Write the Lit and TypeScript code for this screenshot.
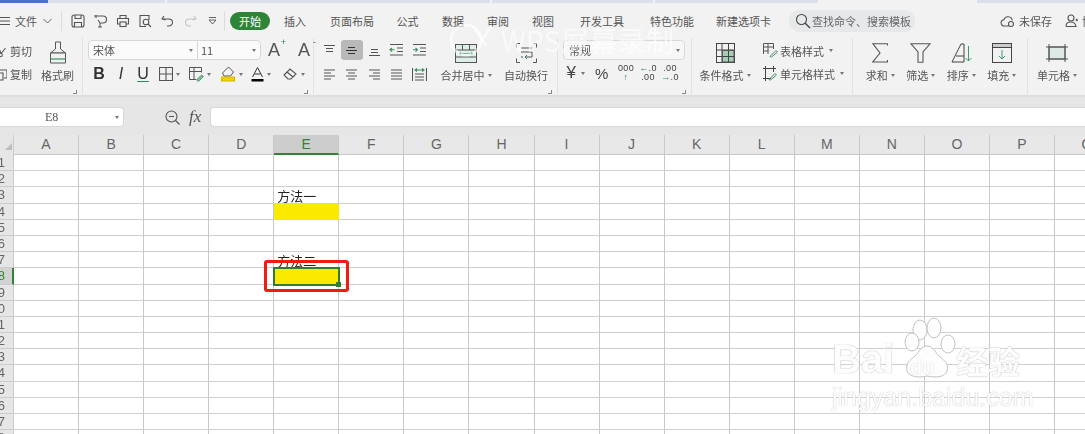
import { LitElement, html, css, svg } from "lit";
import { customElement } from "lit/decorators.js";

const S = (w: number, h: number, body: any, cls = "") =>
  html`<svg class=${cls} width=${w} height=${h} viewBox="0 0 ${w} ${h}" fill="none" stroke="currentColor" stroke-width="1.1">${body}</svg>`;

const I: Record<string, any> = {
  menu: S(11, 10, svg`<path d="M0 1.5h11M0 5h11M0 8.5h11"/>`),
  chev: S(9, 6, svg`<path d="M.5 1l4 4 4-4" stroke-width=".9"/>`),
  save: S(14, 14, svg`<rect x="1" y="1" width="12" height="12" rx="2"/><path d="M4 1v3.5h6V1M3.5 13V8.5h7V13"/>`),
  saveas: S(14, 14, svg`<path d="M1 2h4M3 1v3M5 2h5a3 3 0 0 1 0 7H7.500M7 9v4M5 13h4M5 6l2 3"/>`),
  print: S(14, 14, svg`<path d="M4 4V1.500h6V4M4 10H1.500V4.500h11V10H10"/><rect x="4" y="8" width="6" height="4.500"/>`),
  preview: S(14, 14, svg`<path d="M11 6V1.500H2v11h6"/><circle cx="8" cy="8" r="2.800"/><path d="M10 10l3 3"/>`),
  undo: S(13, 12, svg`<path d="M3 1L1 4l3.500 1M1.500 4H8a3.500 3.500 0 0 1 0 7H6"/>`),
  redo: S(13, 12, svg`<path d="M10 1l2 3-3.500 1M11.500 4H5a3.500 3.500 0 0 0 0 7h2"/>`, "dim"),
  more: S(9, 9, svg`<path d="M1 1.500h7M1 4l3.500 4L8 4z" stroke-width=".9"/>`),
  search: S(16, 16, svg`<circle cx="6.500" cy="6.500" r="5"/><path d="M10 10l5 5" stroke-width="1.400"/>`),
  cloud: S(15, 14, svg`<path d="M9 12H4.500a3.200 3.200 0 0 1-.5-6.400 4.300 4.300 0 0 1 8.300.8"/><circle cx="11" cy="10" r="2.500"/>`),
  user: S(13, 13, svg`<circle cx="6" cy="4" r="3"/><path d="M1 12.500c0-6 9-6 10 0h-10M10.500 6h2.500M11.800 4.800v2.400"/>`),
  scissors: S(12, 14, svg`<circle cx="5.500" cy="11" r="1.800"/><path d="M6 9.500L3 2M6.500 9l4-5"/>`),
  copy: S(12, 14, svg`<path d="M5 3h7M12 3v8H9M3 13V6h5v7z"/>`),
  brush: html`<svg width="20" height="24" viewBox="0 0 20 24" fill="none" stroke="#555" stroke-width="1"><path d="M7.500 1h5v7l5 4H2.500l5-4z"/><path d="M2.500 12h15v10h-15z" fill="#eef3ef"/><path d="M2.500 18h15" stroke="#3d8f5f" stroke-width="1.200"/></svg>`,
  sizeUp: html`<span class="aa">A<sup class="g">+</sup></span>`,
  sizeDown: html`<span class="aa">A<sup>-</sup></span>`,
  border: S(14, 14, svg`<path d="M.5.500h13v13H.5zM.5 7h13M7 .5v13"/>`),
  fmt: html`<svg width="15" height="15" viewBox="0 0 15 15" fill="none" stroke="#555"><path d="M.5 12.500V.5h12v5M.5 4.500h12M5 .5V12M.5 12.500H7"/><path d="M7.500 13l5-5 2 1.500-5 5z" fill="#7fb89a" stroke="#5d9c7c"/></svg>`,
  paint: html`<svg width="15" height="16" viewBox="0 0 15 16" fill="none" stroke="#555"><path d="M7.500 1l5 5-3 4H3L1.500 7z"/><rect x=".5" y="11" width="13" height="4" fill="#f4d000" stroke="#d6b800"/></svg>`,
  fontA: html`<svg width="13" height="15" viewBox="0 0 13 15" fill="none" stroke="#333"><path d="M1.500 10L6.500.5 11.500 10M3.500 7h6"/><rect x=".5" y="12" width="12" height="2.500" fill="#000" stroke="none"/></svg>`,
  eraser: S(15, 14, svg`<path d="M1 8l6-6 6 5-5 5H5zM4 5l6 5"/>`),
  al1: S(13, 11, svg`<path d="M1 .5h11M3 3.500h7M3 6.500h7"/>`),
  al2: S(13, 11, svg`<path d="M3 2.500h7M1 5.500h11M3 8.500h7"/>`),
  al3: S(13, 11, svg`<path d="M3 4.500h7M3 7.500h7M1 10.500h11"/>`),
  ind1: S(15, 12, svg`<path d="M1 .5h13M8 4h6M8 7.500h6M1 11h13"/><path d="M5.500 5.800H1M3 4L1 5.800l2 1.800" stroke="#3d8f5f"/>`),
  ind2: S(15, 12, svg`<path d="M1 .5h13M8 4h6M8 7.500h6M1 11h13"/><path d="M1 5.800h4.500M3.500 4l2 1.800-2 1.800" stroke="#3d8f5f"/>`),
  left: S(13, 11, svg`<path d="M1 1h11M1 4h7M1 7h11M1 10h7"/>`),
  center: S(13, 11, svg`<path d="M1 1h11M3 4h7M1 7h11M3 10h7"/>`),
  right: S(13, 11, svg`<path d="M1 1h11M5 4h7M1 7h11M5 10h7"/>`),
  just: S(13, 11, svg`<path d="M1 1h11M1 4h11M1 7h11M1 10h11"/>`),
  dist: S(15, 13, svg`<path d="M.5 0v13M14.500 0v13M3 6h9M3 9h9M3 12h9"/><path d="M3 2h9M5 .5L3 2l2 1.500M10 .5L12 2l-2 1.500" stroke="#3d8f5f"/>`),
  merge: html`<svg width="22" height="19" viewBox="0 0 22 19" fill="none" stroke="#555"><rect x=".5" y=".5" width="21" height="18" fill="#dfeee6"/><path d="M.5 6h21M7.500.5V6M14.500.5V6M.5 13h21"/><path d="M4 9.500h14M6 8l-2 1.500L6 11M16 8l2 1.500L16 11" stroke="#2e8b57"/></svg>`,
  wrap: html`<svg width="21" height="20" viewBox="0 0 21 20" fill="none" stroke="#555"><path d="M4 .5H.5v4M17 .5h3.500v4M.5 15.500v4H4M20.500 15.500v4H17M5 5h11M5 9h11v5H9M5 14h2"/><path d="M11 12l-2 2 2 2" stroke="#2e8b57"/></svg>`,
  gridc: html`<svg width="19" height="20" viewBox="0 0 19 20" fill="none" stroke="#444"><rect x=".5" y=".5" width="18" height="19"/><path d="M6 .5v19M12.500.5v19M.5 7h18M.5 13.500h18"/><rect x="6.500" y="7.500" width="11.500" height="11.500" fill="#a7cdb6" stroke="#555"/><path d="M12.500 7.500v11.500M6.500 13.500H18"/></svg>`,
  tstyle: html`<svg width="15" height="15" viewBox="0 0 15 15" fill="none" stroke="#555"><path d="M.5 11V.5h10V6M.5 4h10M5 .5V11M.5 8h5"/><path d="M7 13.500l6-6 1.500 1.500-6 5z" stroke="#4b8f6c"/></svg>`,
  cstyle: html`<svg width="15" height="15" viewBox="0 0 15 15" fill="none" stroke="#444"><path d="M0 2.500h13M0 12.500h8M2.500 0v15M10.500 0v6"/><path d="M6 13.500l6-6 1.500 1.500-6 5z" stroke="#4b8f6c"/></svg>`,
  sigma: S(16, 20, svg`<path d="M15.500 2.500V.7H.8L8 10 .8 19h14.700v-2"/>`),
  filter: S(21, 20, svg`<path d="M.8.700h19.400L13 9v10.300H8V9z"/>`),
  sort: html`<svg width="21" height="20" viewBox="0 0 21 20" fill="none" stroke="#444"><path d="M1 19L10 1h3v18H1M5 13h8"/><path d="M17.500 3v15M14.500 15l3 3 3-3" stroke="#3d9b6a"/></svg>`,
  fill: html`<svg width="20" height="20" viewBox="0 0 20 20" fill="none" stroke="#444"><rect x=".5" y=".5" width="19" height="19"/><rect x=".5" y=".5" width="19" height="4" fill="#ccc"/><path d="M10 7v9M7 13l3 3 3-3" stroke="#3d9b6a"/></svg>`,
  cell: html`<svg width="22" height="18" viewBox="0 0 22 18" fill="none" stroke="#555"><rect x="3" y="3" width="16" height="12" fill="#dfe9e3"/><path d="M0 3h22M0 15h22M3 0v18M19 0v18"/></svg>`,
  zoom: S(15, 15, svg`<circle cx="6.500" cy="6.500" r="5.500"/><path d="M10.500 10.500l4 4M4 6.500h5" stroke-width="1.200"/>`),
};

const caret = html`<i class="caret"></i>`;
const corner = html`<i class="launch"></i>`;

@customElement("app-root")
export class AppRoot extends LitElement {
  static styles = css`
    :host { display: block; width: 1085px; height: 434px; overflow: hidden; position: relative; background: #fff; color: #555;
      font-family: "Noto Sans CJK SC", "Noto Sans", sans-serif; font-size: 11px; }
    .blur { filter: blur(0.4px); }
    svg { display: block; flex: none; }
    .dim { color: #c4c4c4; }
    .strip { height: 3px; display: flex; background: #d9dfeb; }
    .strip i { display: block; flex: none; }
    .s1 { width: 48px; background: #4a74c9; }
    .s2 { width: 117px; }
    .s3 { width: 2px; background: #f2f2f2; }
    .s4 { width: 323px; }
    .s5 { width: 161px; }
    .s8 { width: 163px; }
    .s6 { width: 159px; background: #f2f2f2; }
    .menu { height: 35px; background: #f2f2f2; display: flex; align-items: center; white-space: nowrap; }
    .menu > * { flex: none; }
    .file { width: 61px; display: flex; align-items: center; box-sizing: border-box; }
    .file .lbl { font-size: 11px; margin: 0 6px 0 5px; }
    .file svg:first-child { margin-left: -1px; }
    .vsep { width: 1px; height: 20px; background: #dcdcdc; }
    .quick { display: grid; grid-template-columns: repeat(7, 22.5px); margin-left: 4.5px; justify-items: center; align-items: center; width: 157.5px; }
    .pill { width: 40px; height: 18px; border-radius: 9px; background: #2f8537; color: #fff; display: flex; align-items: center; justify-content: center; margin-left: 5px; font-size: 11px; }
    .tabs { display: grid; grid-template-columns: 46px 68px 43px 48px 42px 48px 70px 70px 73px; margin-left: 2px; text-align: center; }
    .search { width: 126px; height: 22px; border-radius: 11px; background: #e6e8ea; margin-left: 9px; display: flex; align-items: center; gap: 1px; padding-left: 6px; box-sizing: border-box; color: #666; font-size: 11px; }
    .search svg { color: #444; }
    .status { display: flex; align-items: center; margin-left: 85px; gap: 4px; }
    .status .u { margin-left: 9px; }

    .ribbon { height: 57px; background: #f2f2f2; display: flex; border-bottom: 1px solid #dcdcdc; }
    .group { position: relative; border-right: 1px solid #e2e2e2; height: 56px; flex: none; box-sizing: border-box; }
    .launch { position: absolute; right: 5px; bottom: 0; width: 3px; height: 3px; border-right: 1px solid #888; border-bottom: 1px solid #888; }
    .g1 { width: 83px; display: grid; grid-template-columns: 35px 45px; }
    .small { display: flex; align-items: center; gap: 1px; height: 23px; margin-left: -3px; white-space: nowrap; }
    .g1 .small { margin-left: -5px; gap: 3px; }
    .stack { padding-top: 1px; }
    .big { display: flex; flex-direction: column; align-items: center; white-space: nowrap; }
    .big .ic { height: 24px; display: flex; align-items: center; justify-content: center; margin-top: 3px; }
    .big .t { display: flex; align-items: center; gap: 3px; height: 16px; margin-top: 2px; line-height: 16px; }
    .g2 { width: 231px; padding-left: 5px; }
    .r1 { display: flex; align-items: center; height: 20px; margin-top: 2px; }
    .sel { height: 20px; box-sizing: border-box; border: 1px solid #d8d8d8; border-radius: 4px; background: #fbfbfb; display: flex; align-items: center; font-size: 11px; color: #555; }
    .fontsel { width: 173px; flex: none; }
    .fontsel .n { width: 109px; height: 100%; display: flex; align-items: center; justify-content: space-between; padding: 0 4px; box-sizing: border-box; border-right: 1px solid #d8d8d8; }
    .fontsel .z { flex: 1; display: flex; align-items: center; justify-content: space-between; padding: 0 4px 0 3px; }
    .aa { font: 18px "Liberation Sans", sans-serif; color: #555; position: relative; display: block; width: 16px; }
    .aa sup { position: absolute; top: -2px; right: -2px; font-size: 9px; line-height: 9px; color: #666; }
    .aa sup.g { color: #2e8b57; }
    .az { display: flex; margin-left: 7px; gap: 14px; }
    .r2 { display: flex; align-items: center; height: 20px; margin-top: 4px; }
    .fcell { display: flex; align-items: center; gap: 3px; padding-left: 5px; box-sizing: border-box; height: 20px; flex: none; }
    .w22 { width: 22px; justify-content: center; padding-left: 0; font: 16px "Liberation Sans", sans-serif; color: #333; }
    .w30 { width: 30px; }
    .w32 { width: 32px; }
    .u { text-decoration: underline; text-decoration-color: #2e8b57; text-underline-offset: 2px; }
    .caret { display: block; width: 0; height: 0; border: 2.5px solid transparent; border-top: 3px solid #777; border-bottom: 0; flex: none; }
    .g3 { width: 244px; display: grid; grid-template-columns: 118px 60px 60px; padding-left: 4px; }
    .aligns { display: grid; grid-template-columns: repeat(5, 22.5px); grid-template-rows: 24px 24px; justify-items: center; align-items: center; height: 48px; align-content: start; }
    .on { background: #b9b9b9; width: 22px; height: 20px; border-radius: 3px; display: flex; align-items: center; justify-content: center; color: #333; }
    .g4 { width: 134px; padding-left: 5px; }
    .numsel { width: 122px; padding: 0 4px 0 5px; justify-content: space-between; background: #f7f7f7; }
    .numrow { display: flex; align-items: center; height: 24px; margin-top: 1px; color: #444; }
    .yen { font: 17px "Liberation Sans", sans-serif; width: 13px; text-align: right; }
    .numrow .caret { margin: 0 0 0 5px; }
    .pct { font: 15px "Liberation Sans", sans-serif; margin-left: 10px; width: 20px; }
    .mini { font: 9px/9px "Liberation Sans", sans-serif; text-align: center; letter-spacing: .3px; width: 22px; }
    .mini b { font-weight: 400; color: #2e8b57; }
    .g5 { width: 161px; display: grid; grid-template-columns: 66px 92px; column-gap: 5px; }
    .g5 .small { margin-left: 0; gap: 2px; }
    .g5 .small .caret { margin-left: 3px; }
    .g6 { width: 175px; display: grid; grid-template-columns: 7px repeat(4, 40.500px); }
    .g7 { flex: 1; border: 0; display: grid; grid-template-columns: 58px; }

    .fbar { height: 39px; background: #e6e6e6; box-sizing: border-box; display: flex; padding-top: 10px; align-items: flex-start; border-top: 1px solid #dedede; }
    .name { width: 124px; flex: none; height: 20px; background: #fff; border: 1px solid #d8d8d8; border-left: 0; border-radius: 0 4px 4px 0; box-sizing: border-box; display: flex; align-items: center; padding: 0 4px 0 45px; justify-content: space-between; color: #555; font: 12px "Liberation Serif", serif; }
    .fx { display: flex; align-items: center; height: 20px; margin-left: 41px; gap: 9px; color: #555; }
    .fx em { font: italic 17px "Liberation Serif", serif; }
    .input { flex: 1; height: 20px; background: #fff; border: 1px solid #d8d8d8; border-right: 0; border-radius: 4px 0 0 4px; margin-left: 9px; box-sizing: border-box; }

    .sheet { display: grid; grid-template-columns: 14px repeat(17, 65.070px); grid-template-rows: 20px repeat(18, 16.200px); height: 299px; overflow: hidden; }
    .cor { background: #e6e6e6; position: relative; border-right: 1px solid #ccc; }
    .cor i { position: absolute; right: 1px; bottom: 5px; width: 0; height: 0; border-left: 7px solid transparent; border-bottom: 7px solid #bdbdbd; }
    .ch { background: #e8e8e8; border-right: 1px solid #c8c8c8; box-sizing: border-box; border-bottom: 1px solid #c8c8c8; text-align: center; font: 14px/19px "Liberation Sans", sans-serif; color: #666; }
    .ch.act { background: #cdcdcd; color: #2f8537; border-bottom: 2px solid #2f8537; }
    .rh { background: #e6e6e6; border-right: 1px solid #c8c8c8; border-bottom: 1px solid #cccccc; box-sizing: border-box; font: 13px/15px "Liberation Sans", sans-serif; color: #666; overflow: hidden; display: flex; justify-content: flex-end; padding-right: 8px; white-space: nowrap; }
    .rh.act { background: #d2d2d2; color: #2f8537; border-right: 2px solid #2f8537; padding-right: 7px; }
    .c { border-right: 1px solid #c8c8c8; border-bottom: 1px solid #d0d0d0; box-sizing: border-box; font-size: 13px; line-height: 16px; color: #222; padding: 1px 0 0 3px; white-space: nowrap; position: relative; }
    .c.y { background: #f9ea00; border-color: #f9ea00; }
    .c.cur { background: #f9ea00; outline: 2.500px solid #2f7d32; outline-offset: -1.500px; z-index: 1; }
    .c.cur i { position: absolute; right: -3px; bottom: -3px; width: 5px; height: 5px; background: #2f7d32; border: 0; }
    .red { position: absolute; left: 264px; top: 260px; width: 85px; height: 32px; border: 3px solid #f01c12; border-radius: 3px; box-sizing: border-box; z-index: 3; }

    .wps { position: absolute; left: 447px; top: 22px; display: flex; align-items: center; gap: 8px; color: rgba(255,255,255,.6); z-index: 4; pointer-events: none; }
    .wps span { font: 28px/36px "Noto Sans CJK SC", sans-serif; letter-spacing: .4px; white-space: nowrap; }
    .bd { position: absolute; left: 830px; top: 312px; width: 200px; height: 100px; z-index: 4; color: #fff; }
    .bd .bai { position: absolute; left: 2px; top: 24px; font: 700 40px/46px "Liberation Sans", sans-serif; color: #fdfdfd; text-shadow: 0 0 1px #bdbdbd, 0 0 1px #bdbdbd; }
    .bd .du { position: absolute; left: 80px; top: 44px; font: 700 20px/22px "Liberation Sans", sans-serif; color: #fdfdfd; text-shadow: 0 0 1px #bdbdbd; }
    .bd .jy { position: absolute; left: 126px; top: 30px; font: 700 32px/36px "Noto Sans CJK SC", sans-serif; color: #fdfdfd; text-shadow: 0 0 1px #bdbdbd, 0 0 1px #bdbdbd; }
    .bd .url { position: absolute; left: 2px; top: 70px; font: 25px/30px "Liberation Sans", sans-serif; color: #fdfdfd; text-shadow: 0 0 1px #c2c2c2, 0 0 1px #c2c2c2; }
    .bd svg { position: absolute; left: 70px; top: 0; }
  `;

  private big(icon: any, label: string, withCaret = true) {
    return html`<div class="big"><div class="ic">${icon}</div><div class="t">${label}${withCaret ? caret : ""}</div></div>`;
  }

  private menu() {
    const tabs = ["插入", "页面布局", "公式", "数据", "审阅", "视图", "开发工具", "特色功能", "新建选项卡"];
    return html`<div class="menu">
      <div class="file">${I.menu}<span class="lbl">文件</span>${I.chev}</div>
      <div class="vsep"></div>
      <div class="quick">${I.save}${I.saveas}${I.print}${I.preview}${I.undo}${I.redo}${I.more}</div>
      <div class="vsep"></div>
      <div class="pill">开始</div>
      <div class="tabs">${tabs.map((t) => html`<span>${t}</span>`)}</div>
      <div class="search">${I.search}<span>查找命令、搜索模板</span></div>
      <div class="status">${I.cloud}<span>未保存</span><span class="u">${I.user}</span><span>协作</span></div>
    </div>`;
  }

  private ribbon() {
    return html`<div class="ribbon">
      <div class="group g1">
        <div class="stack">
          <div class="small">${I.scissors}<span>剪切</span></div>
          <div class="small">${I.copy}<span>复制</span></div>
        </div>
        ${this.big(I.brush, "格式刷", false)}
        ${corner}
      </div>
      <div class="group g2">
        <div class="r1">
          <div class="sel fontsel">
            <div class="n"><span>宋体</span>${caret}</div>
            <div class="z"><span>11</span>${caret}</div>
          </div>
          <div class="az">${I.sizeUp}${I.sizeDown}</div>
        </div>
        <div class="r2">
          <div class="fcell w22"><b>B</b></div>
          <div class="fcell w22"><i>I</i></div>
          <div class="fcell w22"><span class="u">U</span></div>
          <div class="fcell w30">${I.border}${caret}</div>
          <div class="fcell w32">${I.fmt}${caret}</div>
          <div class="fcell w30">${I.paint}${caret}</div>
          <div class="fcell w32">${I.fontA}${caret}</div>
          <div class="fcell w32">${I.eraser}${caret}</div>
        </div>
        ${corner}
      </div>
      <div class="group g3">
        <div class="aligns">
          ${I.al1}<div class="on">${I.al2}</div>${I.al3}${I.ind1}${I.ind2}
          ${I.left}${I.center}${I.right}${I.just}${I.dist}
        </div>
        ${this.big(I.merge, "合并居中")}
        ${this.big(I.wrap, "自动换行", false)}
        ${corner}
      </div>
      <div class="group g4">
        <div class="r1"><div class="sel numsel"><span>常规</span>${caret}</div></div>
        <div class="numrow">
          <span class="yen">¥</span>${caret}
          <span class="pct">%</span>
          <span class="mini">000<br /><b>↑</b></span>
          <span class="mini"><b>←</b>.0<br />.00</span>
          <span class="mini">.00<br /><b>→</b>.0</span>
        </div>
        ${corner}
      </div>
      <div class="group g5">
        ${this.big(I.gridc, "条件格式")}
        <div class="stack">
          <div class="small">${I.tstyle}<span>表格样式</span>${caret}</div>
          <div class="small">${I.cstyle}<span>单元格样式</span>${caret}</div>
        </div>
      </div>
      <div class="group g6">
        <span></span>
        ${this.big(I.sigma, "求和")}
        ${this.big(I.filter, "筛选")}
        ${this.big(I.sort, "排序")}
        ${this.big(I.fill, "填充")}
      </div>
      <div class="group g7">${this.big(I.cell, "单元格")}</div>
    </div>`;
  }

  private sheet() {
    const cols = "ABCDEFGHIJKLMNOPQ".split("");
    const rows = Array.from({ length: 18 }, (_, i) => i + 1);
    const cell = (r: number, c: string) => {
      if (c === "E" && r === 3) return html`<div class="c">方法一</div>`;
      if (c === "E" && r === 4) return html`<div class="c y"></div>`;
      if (c === "E" && r === 7) return html`<div class="c">方法二</div>`;
      if (c === "E" && r === 8) return html`<div class="c cur"><i></i></div>`;
      return html`<div class="c"></div>`;
    };
    return html`<div class="sheet">
      <div class="cor"><i></i></div>
      ${cols.map((c) => html`<div class="ch ${c === "E" ? "act" : ""}">${c}</div>`)}
      ${rows.map(
        (r) => html`<div class="rh ${r === 8 ? "act" : ""}">${r}</div>${cols.map((c) => cell(r, c))}`
      )}
    </div>`;
  }

  render() {
    return html`<div class="blur">
      <div class="strip"><i class="s1"></i><i class="s2"></i><i class="s3"></i><i class="s4"></i><i class="s3"></i><i class="s5"></i><i class="s3"></i><i class="s8"></i><i class="s6"></i></div>
      ${this.menu()}
      ${this.ribbon()}
      <div class="fbar">
        <div class="name"><span>E8</span>${caret}</div>
        <div class="fx">${I.zoom}<em>fx</em></div>
        <div class="input"></div>
      </div>
      ${this.sheet()}
      <div class="red"></div>
      <div class="wps">
        <svg width="46" height="36" viewBox="0 0 46 36" fill="none" stroke="currentColor" stroke-width="3"><circle cx="19" cy="18" r="15"/><path d="M28 8c4 3 9 12 11 16M45 4L32 22"/></svg>
        <span>WPS屏幕录制</span>
      </div>
      <div class="bd">
        <svg width="90" height="70" viewBox="0 0 90 70" fill="#fdfdfd" stroke="#c2c2c2" stroke-width="1">
          <ellipse cx="20" cy="18" rx="7" ry="10" />
          <ellipse cx="38" cy="18" rx="7" ry="10" transform="translate(-4 -2)" />
          <ellipse cx="6" cy="30" rx="7" ry="9" transform="translate(6 0)" />
          <ellipse cx="48" cy="32" rx="7" ry="9" />
          <path d="M26 32c6 0 8 6 12 10 6 5 10 8 8 15-2 6-10 7-20 5-8 2-18 1-20-5-2-7 3-11 8-15 4-4 6-10 12-10z" transform="translate(1 2)" />
        </svg>
        <span class="bai">Bai</span>
        <span class="du">du</span>
        <span class="jy">经验</span>
        <span class="url">jingyan.baidu.com</span>
      </div>
    </div>`;
  }
}
